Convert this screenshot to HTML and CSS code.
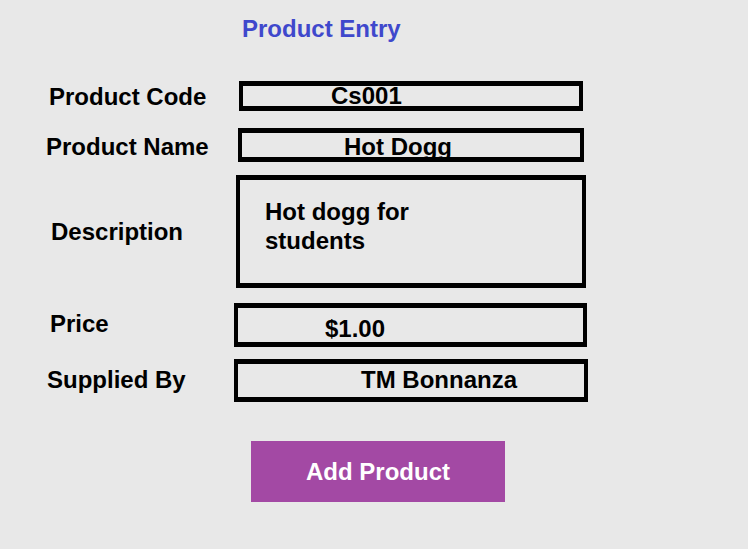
FILE: index.html
```html
<!DOCTYPE html>
<html lang="en">
<head>
  <meta charset="UTF-8">
  <meta name="viewport" content="width=device-width, initial-scale=1.0">
  <title>Product Entry</title>
  <link rel="stylesheet" href="styles.css">
</head>
<body>
  <h1 class="title">Product Entry</h1>

  <div class="row row-code">
    <label class="label">Product Code</label>
    <div class="field">Cs001</div>
  </div>

  <div class="row row-name">
    <label class="label">Product Name</label>
    <div class="field">Hot Dogg</div>
  </div>

  <div class="row row-desc">
    <label class="label">Description</label>
    <div class="field"><p class="desc-text">Hot dogg for students</p></div>
  </div>

  <div class="row row-price">
    <label class="label">Price</label>
    <div class="field">$1.00</div>
  </div>

  <div class="row row-supplier">
    <label class="label">Supplied By</label>
    <div class="field">TM Bonnanza</div>
  </div>

  <button class="add-btn">Add Product</button>
</body>
</html>
```

FILE: styles.css
```css
body {
  margin: 0;
  background: #e8e8e8;
  color: #000;
  font-family: 'Liberation Sans', Arial, sans-serif;
  font-weight: bold;
  font-size: 24px;
  line-height: 28px;
}

.title {
  margin: 0;
  padding: 15px 0 0 242px;
  font-size: 24px;
  line-height: 28px;
  color: #3f48cc;
}

.row {
  display: flex;
  align-items: flex-start;
}

.label {
  box-sizing: border-box;
  flex: 0 0 234px;
  white-space: nowrap;
}

.field {
  box-sizing: border-box;
  border: solid #000;
  border-width: 5px 4px;
  line-height: 20px;
  white-space: nowrap;
}

/* each row follows the hand-drawn mockup */
.row-code { margin-top: 38px; }
.row-code .label { margin-top: 2px; padding-left: 49px; }
.row-code .field { margin-left: 5px; width: 344px; height: 30px; padding-left: 88px; }

.row-name { margin-top: 17px; }
.row-name .label { margin-top: 5px; padding-left: 46px; }
.row-name .field { margin-left: 4px; width: 346px; height: 34px; padding: 4px 0 0 102px; }

.row-desc { margin-top: 13px; }
.row-desc .label { margin-top: 43px; padding-left: 51px; }
.row-desc .field { margin-left: 2px; width: 350px; height: 113px; padding: 17px 0 0 25px; white-space: normal; }

.desc-text {
  margin: 0;
  width: 170px;
  line-height: 29px;
}

.row-price { margin-top: 15px; }
.row-price .label { margin-top: 7px; padding-left: 50px; }
.row-price .field { width: 353px; height: 44px; padding: 11px 0 0 87px; }

.row-supplier { margin-top: 12px; }
.row-supplier .label { margin-top: 7px; padding-left: 47px; }
.row-supplier .field { width: 354px; height: 43px; padding: 6px 0 0 123px; }

.add-btn {
  display: block;
  margin: 39px 0 0 251px;
  width: 254px;
  height: 61px;
  padding: 0;
  border: none;
  background: #a349a4;
  color: #fff;
  font: inherit;
  line-height: 61px;
  cursor: pointer;
}
```
